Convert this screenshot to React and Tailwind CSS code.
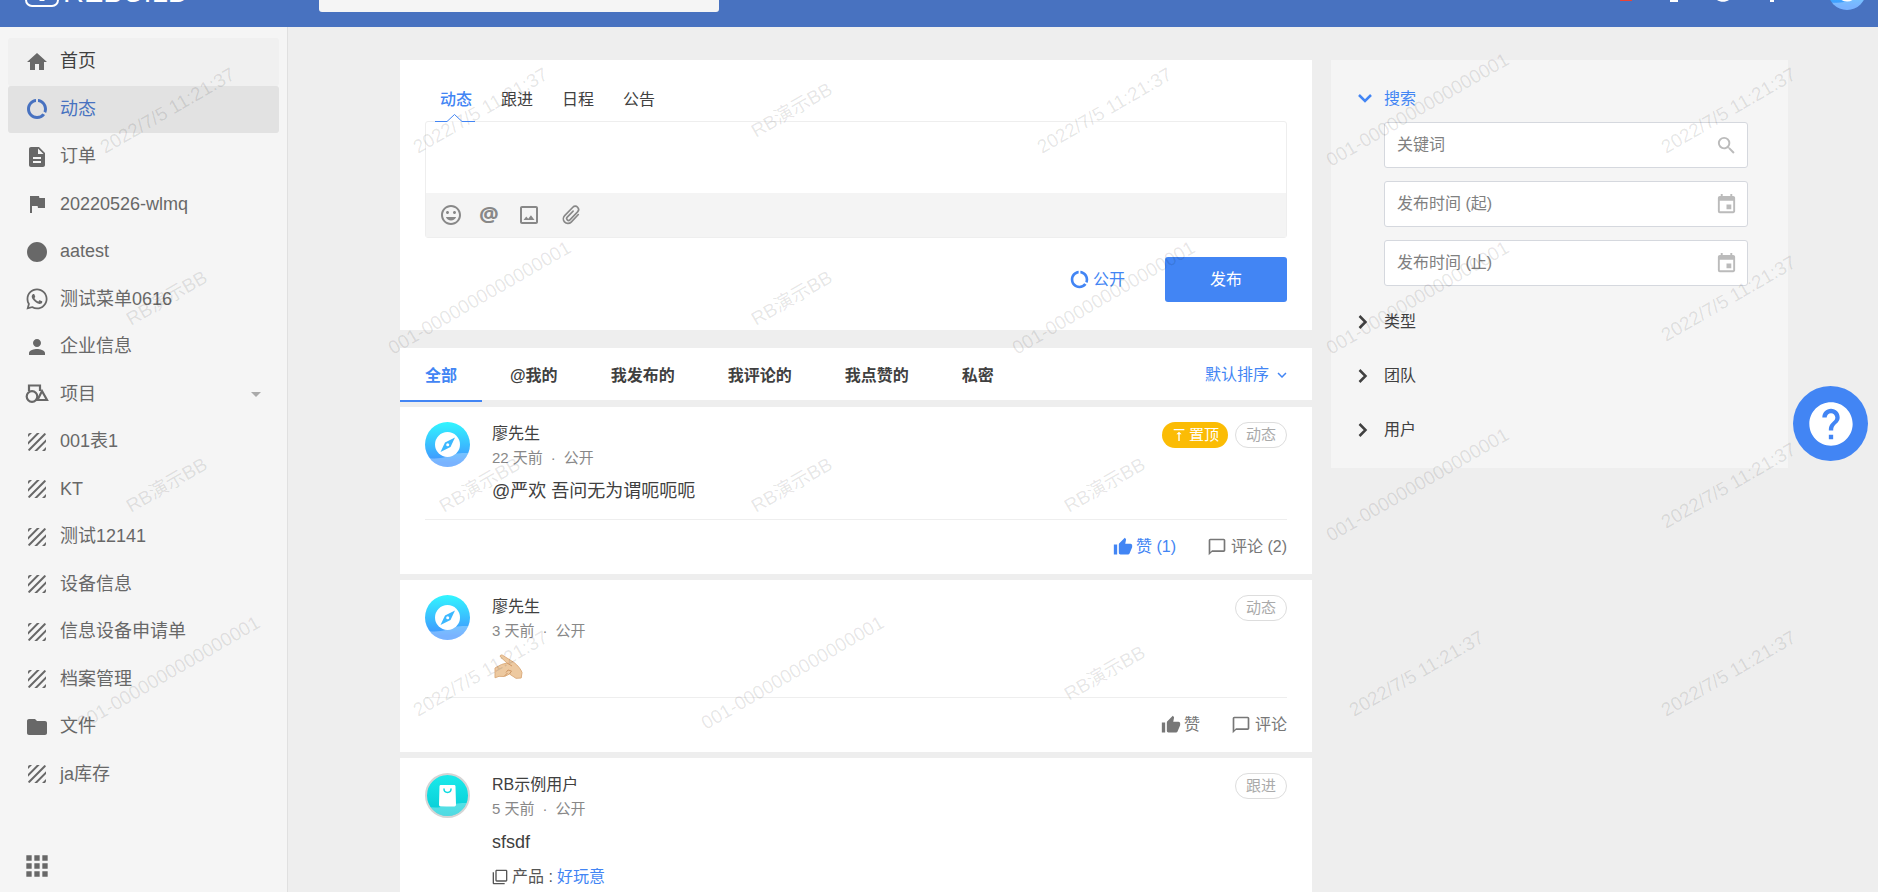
import { useState } from "react";
import {
  MdAccessTimeFilled,
  MdApps,
  MdArrowDropDown,
  MdChatBubbleOutline,
  MdCropOriginal,
  MdDataUsage,
  MdDescription,
  MdEvent,
  MdExpandMore,
  MdFilterNone,
  MdFlag,
  MdFolder,
  MdHelp,
  MdHome,
  MdLens,
  MdMood,
  MdPerson,
  MdSearch,
  MdTexture,
  MdThumbUp,
  MdVerticalAlignTop,
} from "react-icons/md";
import { FaWhatsapp } from "react-icons/fa";

const ShapesIcon = ({ className }) => (
  <svg viewBox="0 0 24 24" className={className} fill="none" stroke="currentColor" strokeWidth="2.200">
    <path d="M4 9V3.500h11V9" />
    <circle cx="7" cy="14.500" r="5.300" />
    <path d="M17 9l5 9H12.500z" />
  </svg>
);

const ClipIcon = ({ className }) => (
  <svg
    viewBox="0 0 24 24"
    className={className}
    fill="none"
    stroke="currentColor"
    strokeWidth="1.8"
    strokeLinecap="round"
    strokeLinejoin="round"
  >
    <path d="M20 11.500l-7.800 8.200a5 5 0 0 1-7.300-.2 5 5 0 0 1 .2-6.800l8.900-9.200a3.600 3.600 0 0 1 5.200 0 3.700 3.700 0 0 1 0 5.100l-8.400 8.700a2 2 0 0 1-2.900-2.900l6.400-6.600" />
  </svg>
);

const Chevron = ({ open }) => (
  <svg viewBox="0 0 24 24" className="size-6" fill="none" stroke="currentColor" strokeWidth="2.500">
    <path d={open ? "M6 8l6 6 6-6" : "M6.500 6l6 6-6 6"} />
  </svg>
);

const HandEmoji = () => (
  <svg viewBox="0 0 30 25" className="my-[6px] ml-0.5 h-[25px] w-[30px]" role="img" aria-label="手势">
    <path
      d="M1 14l6.500-3.500 5.500-1.500L6.500 3C5.500 1.500 7 .5 8.500 1.200L20 8.500c4 3 7 7 8 10l-.8 5.500-5.200.3-6.500-4.300-5 2.500L5 22.300l-4 1.500z"
      fill="#edc9a0"
      stroke="#dcae80"
      strokeWidth="1"
      strokeLinejoin="round"
    />
    <path d="M13 9l5 3M12 18.500l2-2.500 3.500 1-2 3M10.500 22l3-3" fill="none" stroke="#cf9866" strokeWidth="1" />
  </svg>
);

const CompassAvatar = ({ className }) => (
  <svg viewBox="0 0 45 45" className={className} aria-hidden="true">
    <defs>
      <linearGradient id="compass" x1="0" y1="0" x2="0" y2="1">
        <stop offset="0" stopColor="#32f6ff" />
        <stop offset="0.9" stopColor="#4093ff" />
      </linearGradient>
      <clipPath id="compassClip">
        <circle cx="22.500" cy="22.500" r="22.500" />
      </clipPath>
    </defs>
    <circle cx="22.500" cy="22.500" r="22.500" fill="url(#compass)" />
    <path d="M0 35c12 4 24-1 30-3 6-1.500 11-1 15-1v14H0z" fill="#fff" opacity="0.3" clipPath="url(#compassClip)" />
    <circle cx="22.500" cy="22.500" r="12.500" fill="#fff" />
    <path d="M30 15.500l-4.500 9.500-10 5 4.500-9.500z" fill="#3cb8ff" />
    <circle cx="22.700" cy="22.700" r="1.500" fill="#fff" />
  </svg>
);

const BagAvatar = ({ className }) => (
  <svg viewBox="0 0 45 45" className={className} aria-hidden="true">
    <defs>
      <linearGradient id="bag" x1="0" y1="0" x2="0" y2="1">
        <stop offset="0" stopColor="#1cebeb" />
        <stop offset="1" stopColor="#04c9d4" />
      </linearGradient>
      <clipPath id="bagClip">
        <circle cx="22.500" cy="22.500" r="20.500" />
      </clipPath>
    </defs>
    <circle cx="22.500" cy="22.500" r="21.500" fill="url(#bag)" stroke="#d5d5d5" strokeWidth="2" />
    <path d="M0 33c12 4 24-1 30-2 6-1.500 11-1 15-1v15H0z" fill="#fff" opacity="0.3" clipPath="url(#bagClip)" />
    <path d="M16 12h13c1 0 1.500.5 1.500 1.500l.5 18c0 1-.5 2-1.700 2H15.700c-1.200 0-1.700-1-1.700-2l.5-18c0-1 .5-1.500 1.500-1.500z" fill="#fff" />
    <path d="M19 16c0 4.500 7 4.500 7 0" fill="none" stroke="#0ddbe0" strokeWidth="1.500" strokeLinecap="round" />
  </svg>
);

const menu = [
  { name: "首页", icon: MdHome, hover: true },
  { name: "动态", icon: MdDataUsage, active: true },
  { name: "订单", icon: MdDescription },
  { name: "20220526-wlmq", icon: MdFlag },
  { name: "aatest", icon: MdLens },
  { name: "测试菜单0616", icon: FaWhatsapp },
  { name: "企业信息", icon: MdPerson },
  { name: "项目", icon: ShapesIcon, children: true },
  { name: "001表1", icon: MdTexture },
  { name: "KT", icon: MdTexture },
  { name: "测试12141", icon: MdTexture },
  { name: "设备信息", icon: MdTexture },
  { name: "信息设备申请单", icon: MdTexture },
  { name: "档案管理", icon: MdTexture },
  { name: "文件", icon: MdFolder },
  { name: "ja库存", icon: MdTexture },
];

const filters = ["全部", "@我的", "我发布的", "我评论的", "我点赞的", "私密"];

const feeds = [
  {
    id: 1,
    avatar: CompassAvatar,
    user: "廖先生",
    time: "22 天前",
    type: "动态",
    pinned: true,
    content: "@严欢 吾问无为谓呃呃呃",
    liked: true,
    likes: 1,
    comments: 2,
  },
  { id: 2, avatar: CompassAvatar, user: "廖先生", time: "3 天前", type: "动态", content: <HandEmoji /> },
  { id: 3, avatar: BagAvatar, user: "RB示例用户", time: "5 天前", type: "跟进", content: "sfsdf", product: "好玩意" },
];

const NAME = "RB演示BB";
const DATE = "2022/7/5 11:21:37";
const ID = "001-0000000000000001";

const watermarks = [
  [DATE, 105, 154], [DATE, 418, 154], [NAME, 756, 138], [DATE, 1042, 154], [ID, 1331, 167], [DATE, 1666, 154],
  [NAME, 131, 326], [ID, 393, 355], [NAME, 756, 326], [ID, 1017, 355], [ID, 1331, 355], [DATE, 1666, 342],
  [NAME, 131, 513], [NAME, 444, 513], [NAME, 756, 513], [NAME, 1069, 513], [ID, 1331, 542], [DATE, 1666, 529],
  [ID, 82, 730], [DATE, 418, 717], [ID, 706, 730], [NAME, 1069, 701], [DATE, 1354, 717], [DATE, 1666, 717],
];

const Header = () => (
  <header className="-mt-[45px] flex h-[72px] shrink-0 items-center bg-[#4872c0] pl-[25px] pr-3 text-white">
    <a href="#home" className="flex w-[294px] items-center gap-1 text-[29px]">
      <svg viewBox="0 0 34 32" className="h-8 w-[34px]" fill="none" stroke="currentColor" strokeWidth="2">
        <rect x="1" y="1" width="32" height="30" rx="6" />
        <path d="M17 14v12" strokeWidth="5" />
      </svg>
      <span className="pt-1">REBUILD</span>
    </a>
    <input aria-label="全局搜索" className="h-[42px] w-[400px] rounded-[3px] bg-[#f5f5f5] px-3 text-gray-800 outline-none" />
    <div className="ml-auto flex items-center gap-6">
      <button aria-label="通知" className="flex w-6 justify-center">
        <span className="h-5 w-3 bg-[#ea4335]" />
      </button>
      <button aria-label="文件" className="flex w-6 justify-center">
        <span className="h-[22px] w-2 bg-white" />
      </button>
      <button aria-label="最近">
        <MdAccessTimeFilled className="size-[26px]" />
      </button>
      <button aria-label="更多" className="mr-5 flex w-6 justify-center">
        <span className="h-[22px] w-1 bg-white" />
      </button>
      <CompassAvatar className="size-[38px]" />
    </div>
  </header>
);

const MenuItem = ({ item }) => {
  const Icon = item.icon;
  let color = "text-[#686868]";
  if (item.active) color = "rounded-[3px] bg-[#e2e2e2] text-[#4872c0]";
  if (item.hover) color = "rounded-[3px] bg-[#f0f0f0] text-[#404040]";

  return (
    <li>
      <a href="#menu" className={`flex h-full items-center gap-[11px] pl-[17px] pr-[11px] ${color}`}>
        <Icon className={`size-6 ${item.hover ? "text-[#686868]" : ""}`} />
        <span>{item.name}</span>
        {item.children && <MdArrowDropDown className="ml-auto size-6 text-[#aaa]" />}
      </a>
    </li>
  );
};

const Sidebar = () => (
  <aside className="flex w-72 shrink-0 flex-col border-r border-[#e0e0e0] bg-[#f5f5f5] px-2 pt-[11px]">
    <ul className="grid h-[760px] auto-rows-fr text-[18px]">
      {menu.map((item) => (
        <MenuItem key={item.name} item={item} />
      ))}
    </ul>
    <button aria-label="全部应用" className="mb-[10px] ml-[13px] mt-auto self-start text-[#686868]">
      <MdApps className="size-8" />
    </button>
  </aside>
);

const Composer = () => {
  const [tab, setTab] = useState("动态");

  return (
    <section className="bg-white px-[25px] pb-7 pt-5">
      <div className="flex pl-[10px]">
        {["动态", "跟进", "日程", "公告"].map((name) => (
          <button
            key={name}
            onClick={() => setTab(name)}
            className={`relative mr-[21px] h-[41px] w-10 pb-0.5 pl-0.5 text-center ${
              tab === name ? "font-medium text-[#4285f4]" : ""
            }`}
          >
            {name}
            {tab === name && (
              <svg viewBox="0 0 40 9" className="absolute -bottom-px left-0 z-10 h-[9px] w-10" fill="#fff">
                <path d="M0 8.500h12l7.500-7 7.500 7h13" stroke="#4285f4" />
              </svg>
            )}
          </button>
        ))}
      </div>
      <div className="rounded-[3px] border border-[#eee]">
        <textarea aria-label="动态内容" className="block h-[71px] w-full resize-none p-3 outline-none" />
        <div className="flex h-11 items-center bg-[#f4f4f4] pl-[13px] text-[#888]">
          <button aria-label="表情" className="w-10">
            <MdMood className="size-6" />
          </button>
          <button aria-label="提到" className="w-[38px] pb-1 text-left font-['Open_Sans'] text-[22px] leading-5 font-bold">
            @
          </button>
          <button aria-label="图片" className="w-[43px]">
            <MdCropOriginal className="size-6" />
          </button>
          <button aria-label="附件">
            <ClipIcon className="size-[22px]" />
          </button>
        </div>
      </div>
      <div className="mt-[19px] flex items-center justify-end gap-10">
        <button className="flex items-center gap-[3px] text-[#4285f4]">
          <MdDataUsage className="size-[21px]" />
          公开
        </button>
        <button className="h-[45px] w-[122px] rounded-[3px] bg-[#4285f4] text-white">发布</button>
      </div>
    </section>
  );
};

const FilterBar = () => {
  const [current, setCurrent] = useState("全部");

  return (
    <nav className="mt-[18px] flex h-[52px] items-center bg-white pr-[25px]">
      {filters.map((name) => (
        <button
          key={name}
          onClick={() => setCurrent(name)}
          className={`mr-[3px] h-[54px] self-start border-b-2 px-[25px] pt-1 font-bold ${
            current === name ? "border-[#4285f4] text-[#4285f4]" : "border-transparent"
          }`}
        >
          {name}
        </button>
      ))}
      <button className="ml-auto flex items-center gap-1 pt-0.5 text-[#4285f4]">
        默认排序
        <MdExpandMore className="-mr-1 size-[18px]" />
      </button>
    </nav>
  );
};

const Feed = ({ feed }) => {
  const Avatar = feed.avatar;

  return (
    <article className="bg-white px-[25px] pt-[15px]">
      <div className="flex gap-[22px]">
        <Avatar className="size-[45px] shrink-0" />
        <div className="flex-1">
          <div className="leading-6">{feed.user}</div>
          <div className="text-[15px] leading-6 text-[#888]">
            {feed.time}
            <span className="mx-2">·</span>
            公开
          </div>
          <div className="mt-[5px] flex min-h-8 items-center text-[18px]">{feed.content}</div>
          {feed.product && (
            <div className="mb-8 mt-[7px] flex items-center gap-1 leading-6 text-[#555]">
              <MdFilterNone className="size-4" />
              <span>产品 :</span>
              <a href="#product" className="text-[#4285f4]">
                {feed.product}
              </a>
            </div>
          )}
        </div>
        <div className="flex gap-[7px] self-start text-[15px]">
          {feed.pinned && (
            <span className="flex h-[26px] items-center gap-0.5 rounded-full bg-[#fbbc05] px-[9px] text-white">
              <MdVerticalAlignTop className="size-4" />
              置顶
            </span>
          )}
          <span className="flex h-[26px] items-center rounded-full border border-[#ddd] px-[10px] text-[#aaa]">
            {feed.type}
          </span>
        </div>
      </div>
      <div className="mt-3 flex h-[55px] items-center justify-end gap-[31px] border-t border-[#eee] text-[#777]">
        <button className={`flex items-center gap-[3px] ${feed.liked ? "text-[#4285f4]" : ""}`}>
          <MdThumbUp className="size-5" />赞 {feed.likes && `(${feed.likes})`}
        </button>
        <button className="flex items-center gap-1">
          <MdChatBubbleOutline className="size-5" />
          评论 {feed.comments && `(${feed.comments})`}
        </button>
      </div>
    </article>
  );
};

const SearchField = ({ label, icon: Icon }) => (
  <label className="flex h-[46px] items-center rounded-[3px] border border-[#d5d8de] bg-white pl-3 pr-[9px]">
    <input aria-label={label} placeholder={label} className="min-w-0 flex-1 outline-none placeholder:text-[#808080]" />
    <Icon className="size-[23px] text-[#bbb]" />
  </label>
);

const SearchPanel = () => (
  <aside className="w-[457px] shrink-0 self-start bg-[#f5f5f5] pb-[11px] pl-[22px] pr-10 pt-[23px]">
    <button className="flex h-8 items-center gap-[7px] text-[#4285f4]">
      <Chevron open />
      搜索
    </button>
    <div className="mb-[9px] ml-[31px] mt-[7px] flex flex-col gap-[13px]">
      <SearchField label="关键词" icon={MdSearch} />
      <SearchField label="发布时间 (起)" icon={MdEvent} />
      <SearchField label="发布时间 (止)" icon={MdEvent} />
    </div>
    {["类型", "团队", "用户"].map((name) => (
      <button key={name} className="flex h-[54px] w-full items-center gap-[7px]">
        <Chevron />
        {name}
      </button>
    ))}
  </aside>
);

const Watermark = () => (
  <div className="pointer-events-none absolute inset-0 overflow-hidden" aria-hidden="true">
    {watermarks.map(([text, left, top]) => (
      <div key={`${left}-${top}`} className="absolute h-0 w-0" style={{ left, top }}>
        <span className="absolute bottom-0 left-0 origin-bottom-left -rotate-30 text-[19px] leading-3 whitespace-nowrap text-black/10">
          {text}
        </span>
      </div>
    ))}
  </div>
);

const App = () => {
  return (
    <div className="relative flex h-screen flex-col overflow-hidden bg-[#eee] font-['Liberation_Sans','Noto_Sans_CJK_SC',sans-serif] text-[16px] text-[#404040]">
      <Header />
      <div className="flex min-h-0 flex-1">
        <Sidebar />
        <main className="flex min-w-0 flex-1 gap-[19px] pl-28 pr-[90px] pt-[33px]">
          <div className="min-w-0 flex-1">
            <Composer />
            <FilterBar />
            <div className="mt-[7px] flex flex-col gap-[6px]">
              {feeds.map((feed) => (
                <Feed key={feed.id} feed={feed} />
              ))}
            </div>
          </div>
          <SearchPanel />
        </main>
      </div>
      <Watermark />
      <button
        aria-label="帮助"
        className="fixed right-[10px] top-[386px] flex size-[75px] items-center justify-center rounded-full bg-[#4285f4] text-white"
      >
        <MdHelp className="size-[52px]" />
      </button>
    </div>
  );
};

export default App;
